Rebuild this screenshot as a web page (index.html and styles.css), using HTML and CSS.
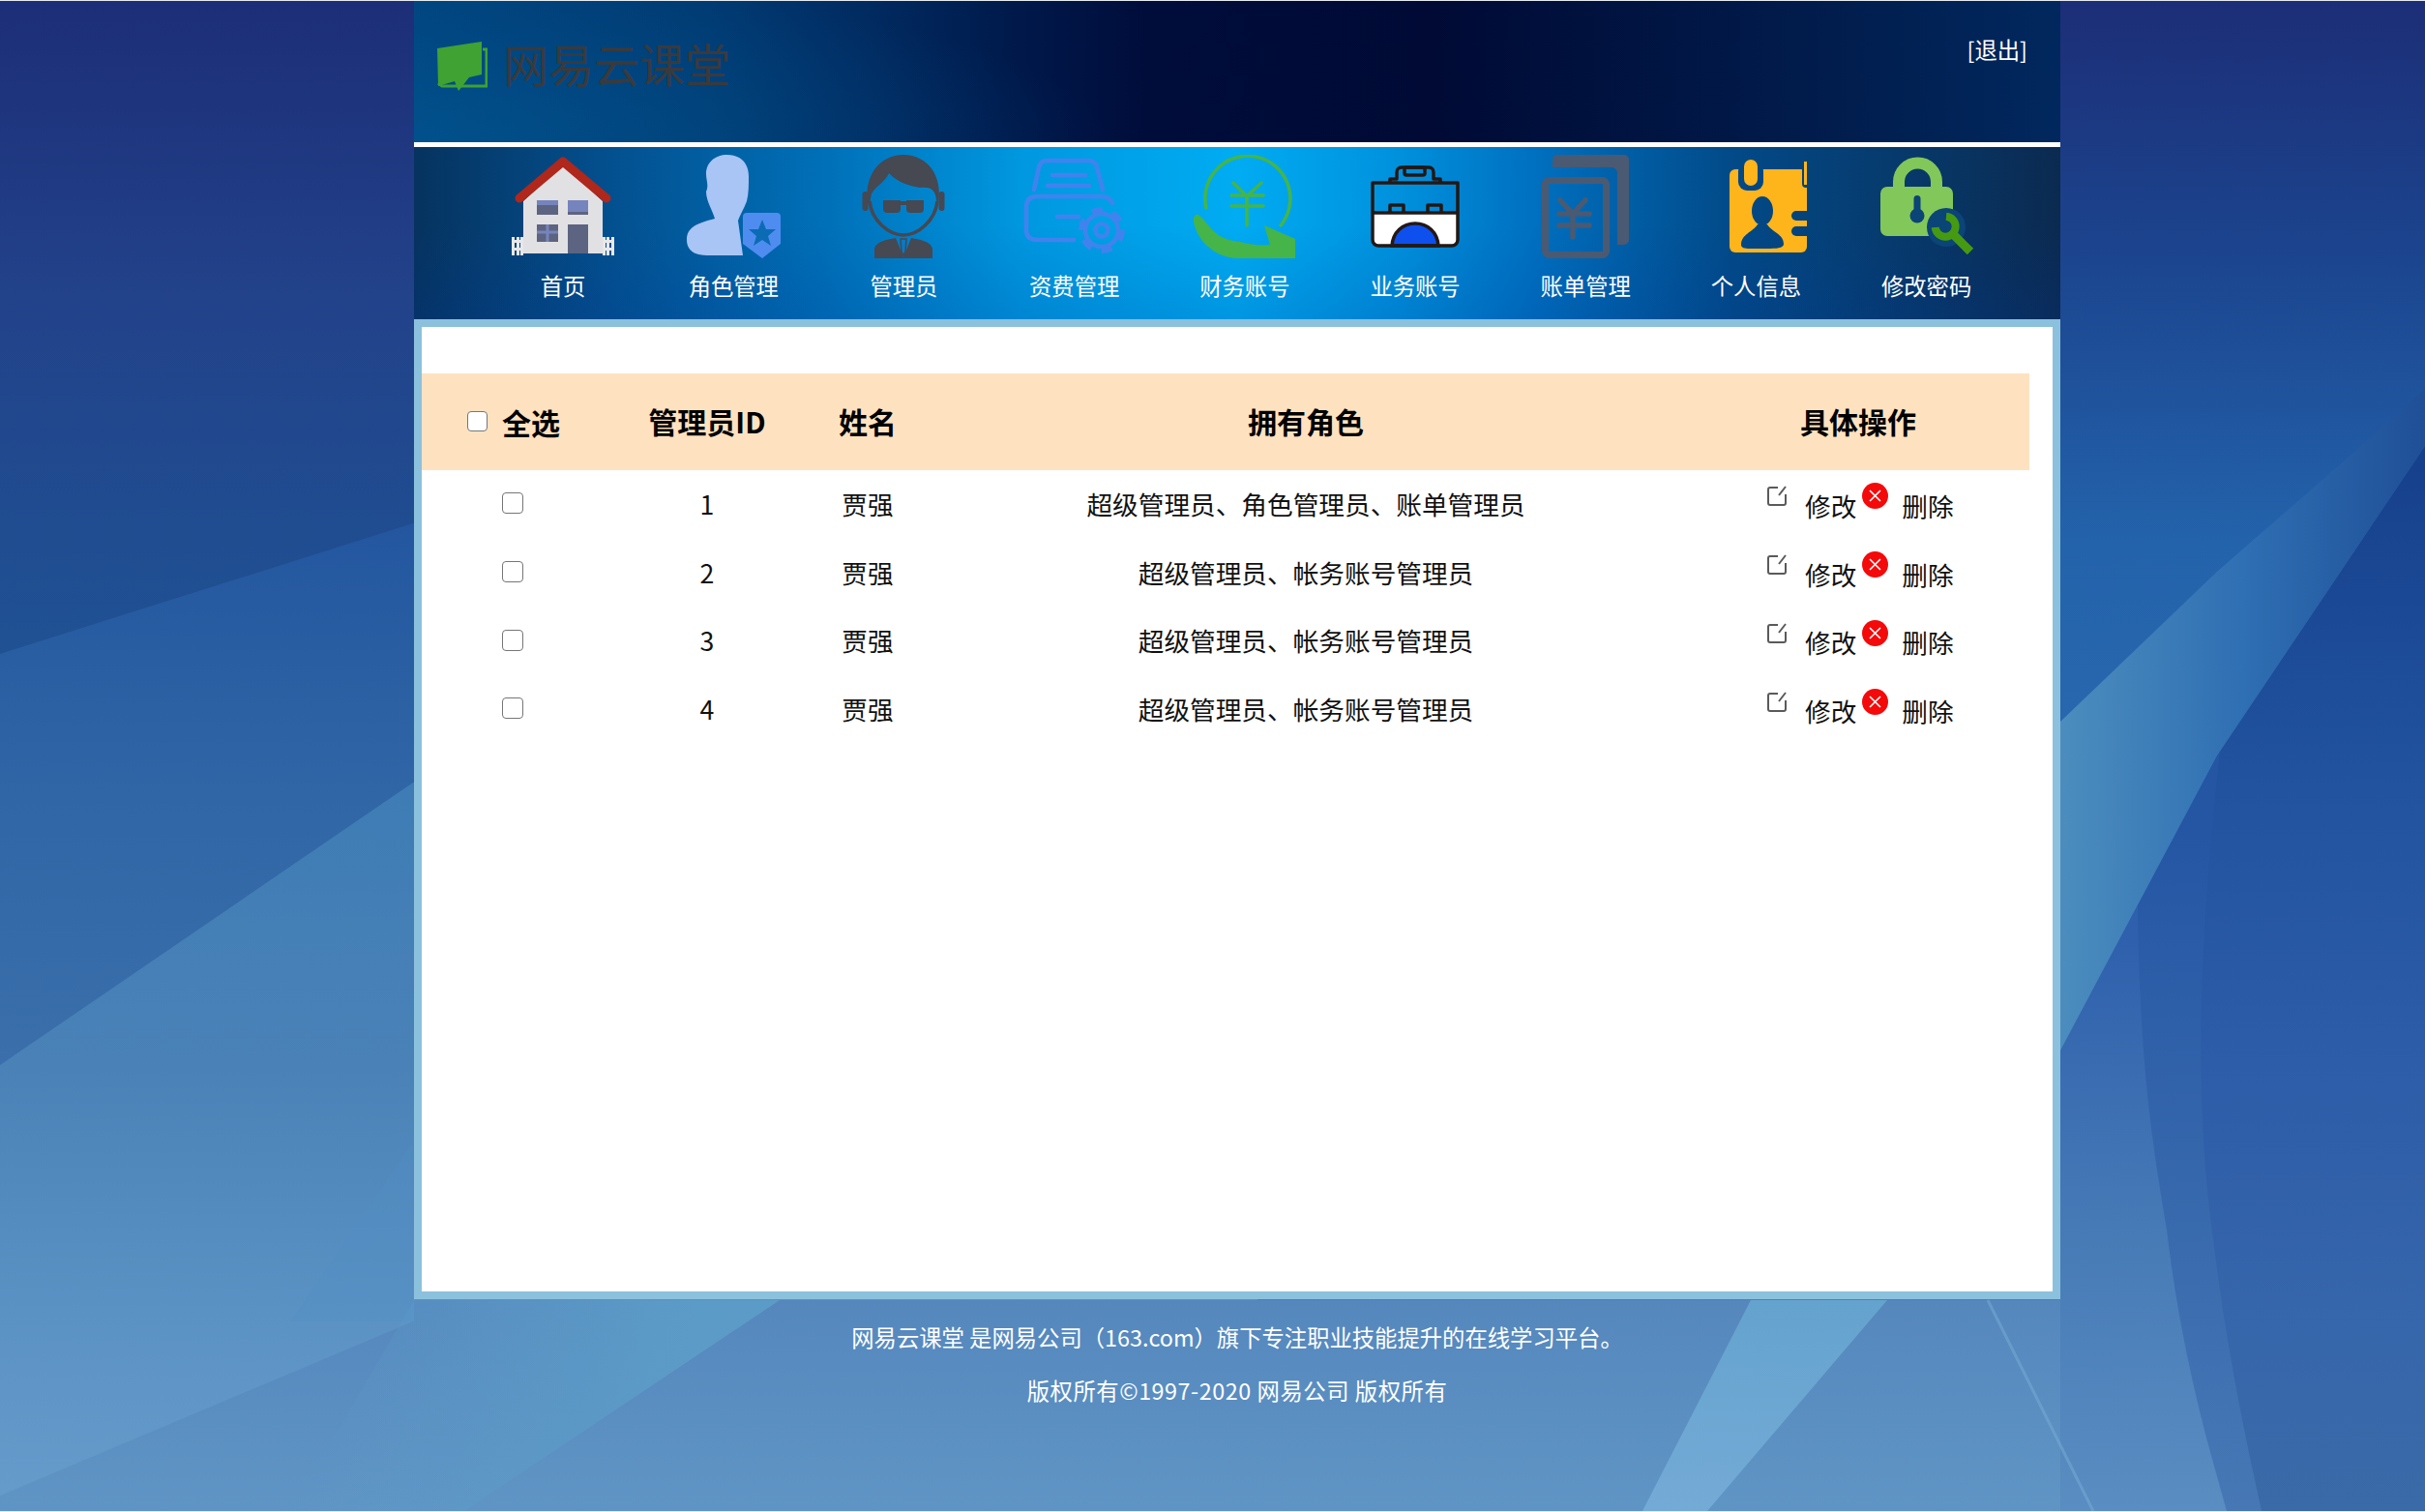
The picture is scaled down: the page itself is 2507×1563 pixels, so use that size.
FILE: index.html
```html
<!DOCTYPE html>
<html lang="zh-CN">
<head>
<meta charset="utf-8">
<title>网易云课堂</title>
<link rel="stylesheet" href="styles.css">
</head>
<body>
<svg class="wallpaper" viewBox="0 0 2507 1561" preserveAspectRatio="none" aria-hidden="true">
  <defs>
    <linearGradient id="b1" gradientUnits="userSpaceOnUse" x1="0" y1="0" x2="0" y2="680"><stop offset="0" stop-color="#1c2e77"/><stop offset=".45" stop-color="#22428a"/><stop offset="1" stop-color="#1f5294"/></linearGradient>
    <linearGradient id="b2" gradientUnits="userSpaceOnUse" x1="0" y1="540" x2="0" y2="1100"><stop offset="0" stop-color="#23569f"/><stop offset=".5" stop-color="#3066a6"/><stop offset="1" stop-color="#3a6fab"/></linearGradient>
    <linearGradient id="b3" gradientUnits="userSpaceOnUse" x1="0" y1="810" x2="0" y2="1540"><stop offset="0" stop-color="#3e7cb5"/><stop offset=".4" stop-color="#4a82b7"/><stop offset=".75" stop-color="#5b92c4"/><stop offset="1" stop-color="#659bcb"/></linearGradient>
    <linearGradient id="b4" gradientUnits="userSpaceOnUse" x1="0" y1="1340" x2="0" y2="1561"><stop offset="0" stop-color="#5587bd"/><stop offset="1" stop-color="#5f95c5"/></linearGradient>
    <linearGradient id="r1" gradientUnits="userSpaceOnUse" x1="0" y1="0" x2="0" y2="800"><stop offset="0" stop-color="#1c2e77"/><stop offset=".35" stop-color="#1c4690"/><stop offset=".7" stop-color="#2363ab"/><stop offset="1" stop-color="#2a68ae"/></linearGradient>
    <linearGradient id="r2" gradientUnits="userSpaceOnUse" x1="2130" y1="0" x2="2507" y2="0"><stop offset="0" stop-color="#4c8dbe"/><stop offset=".5" stop-color="#2f6fb3"/><stop offset="1" stop-color="#1f4f97"/></linearGradient>
    <linearGradient id="r3" gradientUnits="userSpaceOnUse" x1="0" y1="460" x2="0" y2="1561"><stop offset="0" stop-color="#163f8b"/><stop offset=".32" stop-color="#21539f"/><stop offset=".6" stop-color="#2e5da9"/><stop offset=".85" stop-color="#3767ab"/><stop offset="1" stop-color="#3b6aa8"/></linearGradient>
    <linearGradient id="r4" gradientUnits="userSpaceOnUse" x1="0" y1="860" x2="0" y2="1561"><stop offset="0" stop-color="#2456a4"/><stop offset="1" stop-color="#4778b5"/></linearGradient>
    <linearGradient id="r5" gradientUnits="userSpaceOnUse" x1="0" y1="970" x2="0" y2="1561"><stop offset="0" stop-color="#2f60ad"/><stop offset=".5" stop-color="#467ab6"/><stop offset="1" stop-color="#5a8dc1"/></linearGradient>
    <linearGradient id="m1" gradientUnits="userSpaceOnUse" x1="0" y1="1340" x2="0" y2="1561"><stop offset="0" stop-color="#64a3ce"/><stop offset="1" stop-color="#74aad6"/></linearGradient>
    <linearGradient id="m2" gradientUnits="userSpaceOnUse" x1="300" y1="0" x2="720" y2="0"><stop offset="0" stop-color="#5c9cc8" stop-opacity="0"/><stop offset="1" stop-color="#5c9cc8" stop-opacity=".95"/></linearGradient>
  </defs>
  <rect x="0" y="0" width="1300" height="1561" fill="url(#b1)"/>
  <polygon points="0,675 427,540 1300,540 1300,1561 0,1561" fill="url(#b2)"/>
  <polygon points="0,1100 427,808 1300,808 1300,1561 0,1561" fill="url(#b3)"/>
  <polygon points="427,1180 300,1365 427,1365" fill="#4f90c2" opacity=".3"/>
  <polygon points="0,1545 427,1365 1300,1365 1300,1561 0,1561" fill="url(#b4)"/>
  <rect x="1300" y="0" width="1207" height="1561" fill="url(#r1)"/>
  <path d="M1300 1085 H2130 L2292 780 L2507 460 V1561 H1300 Z" fill="url(#r3)"/>
  <path d="M2295 775 C2270 1000 2270 1150 2288 1280 C2300 1380 2320 1480 2338 1561 H1300 V1085 H2130 Z" fill="url(#r4)"/>
  <path d="M2210 935 C2212 1100 2225 1180 2240 1270 C2255 1400 2285 1500 2302 1561 H1300 V1085 H2130 Z" fill="url(#r5)"/>
  <path d="M2130 745 L2292 590 C2360 530 2420 480 2507 400 V460 L2292 780 L2130 1085 Z" fill="url(#r2)"/>
  <rect x="428" y="1343" width="1702" height="218" fill="url(#b4)"/>
  <polygon points="300,1561 428,1343 806,1343 480,1561" fill="url(#m2)"/>
  <polygon points="1810,1343 1951,1343 1765,1561 1698,1561" fill="url(#m1)"/>
  <line x1="2055" y1="1343" x2="2164" y2="1561" stroke="#77aed8" stroke-width="3" opacity=".5"/>
</svg>

<div class="page">
  <header class="topbar">
    <div class="brand">
      <svg class="brand-mark" viewBox="0 0 52 53" aria-hidden="true">
        <polygon points="0,8 46,1 46,35 33,38 22,52 18,42 1,47" fill="#3fa232"/>
        <path d="M47 9 H51 V47 H5 L1 44" fill="none" stroke="#3fa232" stroke-width="3"/>
      </svg>
      <span class="brand-name">网易云课堂</span>
    </div>
    <a class="logout">[退出]</a>
  </header>

  <nav class="menu">
    <a class="menu-item">
      <svg class="menu-icon" viewBox="0 0 110 107" aria-hidden="true">
        <polygon points="14,48 55,10 96,48 96,102 14,102" fill="#e1e1e3"/>
        <g fill="#e8e8ea"><rect x="3" y="88" width="11" height="3"/><rect x="3" y="96" width="11" height="3"/><rect x="2" y="85" width="3" height="19"/><rect x="7" y="85" width="3" height="19"/><rect x="11" y="85" width="3" height="19"/><rect x="96" y="88" width="11" height="3"/><rect x="96" y="96" width="11" height="3"/><rect x="96" y="85" width="3" height="19"/><rect x="100" y="85" width="3" height="19"/><rect x="105" y="85" width="3" height="19"/></g>
        <polyline points="10,45 55,7 100,45" fill="none" stroke="#b0271c" stroke-width="9" stroke-linecap="round" stroke-linejoin="round"/>
        <rect x="28" y="47" width="22" height="15" fill="#5d6481"/><rect x="28" y="47" width="22" height="5" fill="#7684bd"/>
        <rect x="60" y="47" width="21" height="15" fill="#7684bd"/><rect x="60" y="59" width="21" height="3" fill="#5d6481"/>
        <rect x="28" y="72" width="22" height="18" fill="#5d6481"/>
        <path d="M39 72 V90 M28 80 H50" stroke="#7684bd" stroke-width="3"/>
        <rect x="60" y="72" width="21" height="30" fill="#5d6481"/>
      </svg>
      <span class="menu-label">首页</span>
    </a>
    <a class="menu-item">
      <svg class="menu-icon" viewBox="0 0 110 107" aria-hidden="true">
        <path d="M49 0 C62 0 71 8 71 22 C71 32 71 40 69 48 C66 56 62 62 60 68 L65 104 L28 104 C14 104 7 98 7 88 C7 75 17 71 36 66 C34 58 27 48 27 38 C30 32 27 26 27 20 C27 8 36 0 49 0 Z" fill="#a9c5f5"/>
        <path d="M69 60 H100 a4 4 0 0 1 4 4 V92 L85 107 L65 92 V64 a4 4 0 0 1 4 -4 Z" fill="#4f8cf0"/>
        <polygon points="85,67 89,77 99,77 91,84 94,94 85,88 76,94 79,84 71,77 81,77" fill="#0b6cb4"/>
      </svg>
      <span class="menu-label">角色管理</span>
    </a>
    <a class="menu-item">
      <svg class="menu-icon" viewBox="0 0 110 107" aria-hidden="true">
        <path d="M18 50 C14 22 30 0 55 0 C80 0 96 22 91 50 L89 47 C88 35 82 33 72 34 C58 32 46 26 40 19 C36 28 27 32 22 40 L20 50 Z" fill="#464852"/>
        <rect x="12.5" y="38" width="6" height="20" rx="3" fill="#464852"/><rect x="91.5" y="38" width="6" height="20" rx="3" fill="#464852"/>
        <path d="M20 48 C22 68 40 83 55 83 C70 83 88 68 90 48" fill="none" stroke="#464852" stroke-width="3.5"/>
        <path d="M34 47 H52 V56 a4 4 0 0 1 -4 4 H38 a4 4 0 0 1 -4 -4 Z M58 47 H76 V56 a4 4 0 0 1 -4 4 H62 a4 4 0 0 1 -4 -4 Z M50 48 H60 V52 H50 Z" fill="#464852"/>
        <path d="M25 107 V97 C27 90 36 88 47 86 L55 106 L63 86 C74 88 83 90 85 97 V107 Z" fill="#464852"/>
        <path d="M52 87 L58 87 L57 100 L55 104 L53 100 Z" fill="#0b79c4" stroke="#464852" stroke-width="1.5"/>
      </svg>
      <span class="menu-label">管理员</span>
    </a>
    <a class="menu-item">
      <svg class="menu-icon" viewBox="0 0 110 107" aria-hidden="true">
        <g fill="none" stroke="#4183ee" stroke-width="4.5" stroke-linecap="round" stroke-linejoin="round">
          <path d="M13 36 L18 13 C19 8 22 6 27 6 H68 C74 6 77 8 78 13 L84 36"/>
          <path d="M32 21 H66 M27 32 H70 M37 64 H59"/>
          <path d="M94 50 C92 45 88 43 82 43 H17 C9 43 5 47 5 54 V78 C5 85 9 88 17 88 H54"/>
          <circle cx="83" cy="78" r="6.5"/>
          <circle cx="83" cy="78" r="17"/>
        </g>
        <circle cx="83" cy="78" r="21" fill="none" stroke="#4183ee" stroke-width="6" stroke-dasharray="11 11"/>
      </svg>
      <span class="menu-label">资费管理</span>
    </a>
    <a class="menu-item">
      <svg class="menu-icon" viewBox="0 0 110 107" aria-hidden="true">
        <path d="M15 55 A44 44 0 1 1 92 73" fill="none" stroke="#45b549" stroke-width="3.5" stroke-linecap="round"/>
        <path d="M43 29 L57 43 L72 29 M57 43 V73 M41 42 H74 M41 53 H74" fill="none" stroke="#45b549" stroke-width="3.5" stroke-linecap="round"/>
        <path d="M7 62 C18 70 22 88 50 90 C60 93 72 94 81 93 L75 73 L107 87 V107 H48 C30 107 8 95 2 70 C1 64 4 61 7 62 Z" fill="#45b549"/>
      </svg>
      <span class="menu-label">财务账号</span>
    </a>
    <a class="menu-item">
      <svg class="menu-icon" viewBox="0 0 110 107" aria-hidden="true">
        <path d="M12 60 H98 V88 a6 6 0 0 1 -6 6 H18 a6 6 0 0 1 -6 -6 Z" fill="#fff"/>
        <path d="M31 94 C32 80 42 71 55 71 C68 71 78 80 79 94 Z" fill="#0e50ee" stroke="#231815" stroke-width="3.5"/>
        <g fill="none" stroke="#231815" stroke-width="3.5" stroke-linejoin="round">
          <path d="M11 29 H99 V88 a6 6 0 0 1 -6 6 H17 a6 6 0 0 1 -6 -6 Z"/>
          <path d="M11 60 H99"/>
          <path d="M29 29 V25 H36 V18 C36 15 38 13 41 13 H69 C72 13 74 15 74 18 V25 H81 V29"/>
          <rect x="44" y="13" width="21" height="8" rx="2"/>
          <path d="M29 60 V52 H43 V60 M68 60 V52 H82 V60"/>
        </g>
      </svg>
      <span class="menu-label">业务账号</span>
    </a>
    <a class="menu-item">
      <svg class="menu-icon" viewBox="0 0 110 107" aria-hidden="true">
        <path d="M21 13 V5 a5 5 0 0 1 5 -5 H95 a5 5 0 0 1 5 5 V88 a5 5 0 0 1 -5 5 H88 V19 a6 6 0 0 0 -6 -6 Z" fill="#4a5a72"/>
        <rect x="13.5" y="26.5" width="63" height="77" rx="4" fill="none" stroke="#4a5a72" stroke-width="7"/>
        <path d="M29 47 L42 61 L55 47 M28 61 H59 M28 73 H59 M42 61 V85" fill="none" stroke="#4a5a72" stroke-width="5.5" stroke-linecap="round"/>
      </svg>
      <span class="menu-label">账单管理</span>
    </a>
    <a class="menu-item">
      <svg class="menu-icon" viewBox="0 0 110 107" aria-hidden="true">
        <defs>
          <mask id="cardcut"><rect x="0" y="0" width="110" height="107" fill="#fff"/>
            <rect x="37" y="8" width="26" height="29" rx="9" fill="#000"/>
            <ellipse cx="62" cy="58" rx="11" ry="15" fill="#000"/>
            <path d="M40 93 C40 82 52 80 57 72 H67 C72 80 84 82 84 92 C84 97 76 97 62 97 C48 97 40 98 40 93 Z" fill="#000"/>
            <rect x="92" y="58" width="24" height="10" rx="5" fill="#000"/>
            <rect x="92" y="74" width="24" height="10" rx="5" fill="#000"/>
            <rect x="103" y="8" width="8" height="26" rx="4" fill="#000"/>
          </mask>
        </defs>
        <rect x="28" y="15" width="80" height="86" rx="6" fill="#fdb51b" mask="url(#cardcut)"/>
        <rect x="43" y="5" width="14" height="27" rx="7" fill="#fdb51b"/>
        <rect x="105" y="7" width="3" height="24" fill="#fdb51b"/>
      </svg>
      <span class="menu-label">个人信息</span>
    </a>
    <a class="menu-item">
      <svg class="menu-icon" viewBox="0 0 110 107" aria-hidden="true">
        <path d="M26 36 V28 A19.5 19.5 0 0 1 65 28 V36" fill="none" stroke="#82c759" stroke-width="12"/>
        <rect x="7" y="33" width="75" height="51" rx="7" fill="#82c759"/>
        <circle cx="45" cy="63" r="7.5" fill="#0b4477"/><rect x="41.5" y="42" width="7" height="20" rx="3.5" fill="#0b4477"/>
        <circle cx="75" cy="75" r="20" fill="#0b4477"/>
        <path d="M67 67 A10.5 10.5 0 1 0 83 67" fill="none" stroke="#469a12" stroke-width="8" transform="rotate(-45 75 75)"/>
        <path d="M80 80 L100 100" stroke="#469a12" stroke-width="9"/>
      </svg>
      <span class="menu-label">修改密码</span>
    </a>
  </nav>

  <main class="panel">
    <table class="grid">
      <colgroup><col class="c1"><col class="c2"><col class="c3"><col class="c4"><col class="c5"></colgroup>
      <thead>
        <tr>
          <th><label class="all"><input class="tick tick-head" type="checkbox"><span>全选</span></label></th>
          <th>管理员ID</th>
          <th>姓名</th>
          <th>拥有角色</th>
          <th>具体操作</th>
        </tr>
      </thead>
      <tbody>
        <tr>
          <td><input class="tick" type="checkbox"></td><td>1</td><td>贾强</td><td>超级管理员、角色管理员、账单管理员</td>
          <td><div class="ops"><svg class="edit" viewBox="0 0 20 21" aria-hidden="true"><path d="M11 2 H3 a2 2 0 0 0 -2 2 V18 a2 2 0 0 0 2 2 H17 a2 2 0 0 0 2 -2 V9 M12 10 L19 1"/></svg><span class="op-edit">修改</span><svg class="del" viewBox="0 0 27 27" aria-hidden="true"><circle cx="13.5" cy="13.5" r="13.5"/><path d="M8 8 L19 19 M19 8 L8 19"/></svg><span class="op-del">删除</span></div></td>
        </tr>
        <tr>
          <td><input class="tick" type="checkbox"></td><td>2</td><td>贾强</td><td>超级管理员、帐务账号管理员</td>
          <td><div class="ops"><svg class="edit" viewBox="0 0 20 21" aria-hidden="true"><path d="M11 2 H3 a2 2 0 0 0 -2 2 V18 a2 2 0 0 0 2 2 H17 a2 2 0 0 0 2 -2 V9 M12 10 L19 1"/></svg><span class="op-edit">修改</span><svg class="del" viewBox="0 0 27 27" aria-hidden="true"><circle cx="13.5" cy="13.5" r="13.5"/><path d="M8 8 L19 19 M19 8 L8 19"/></svg><span class="op-del">删除</span></div></td>
        </tr>
        <tr>
          <td><input class="tick" type="checkbox"></td><td>3</td><td>贾强</td><td>超级管理员、帐务账号管理员</td>
          <td><div class="ops"><svg class="edit" viewBox="0 0 20 21" aria-hidden="true"><path d="M11 2 H3 a2 2 0 0 0 -2 2 V18 a2 2 0 0 0 2 2 H17 a2 2 0 0 0 2 -2 V9 M12 10 L19 1"/></svg><span class="op-edit">修改</span><svg class="del" viewBox="0 0 27 27" aria-hidden="true"><circle cx="13.5" cy="13.5" r="13.5"/><path d="M8 8 L19 19 M19 8 L8 19"/></svg><span class="op-del">删除</span></div></td>
        </tr>
        <tr>
          <td><input class="tick" type="checkbox"></td><td>4</td><td>贾强</td><td>超级管理员、帐务账号管理员</td>
          <td><div class="ops"><svg class="edit" viewBox="0 0 20 21" aria-hidden="true"><path d="M11 2 H3 a2 2 0 0 0 -2 2 V18 a2 2 0 0 0 2 2 H17 a2 2 0 0 0 2 -2 V9 M12 10 L19 1"/></svg><span class="op-edit">修改</span><svg class="del" viewBox="0 0 27 27" aria-hidden="true"><circle cx="13.5" cy="13.5" r="13.5"/><path d="M8 8 L19 19 M19 8 L8 19"/></svg><span class="op-del">删除</span></div></td>
        </tr>
      </tbody>
    </table>
  </main>

  <footer class="foot">
    <p>网易云课堂 是网易公司（163.com）旗下专注职业技能提升的在线学习平台。</p>
    <p class="foot-copy">版权所有©1997-2020 网易公司 版权所有</p>
  </footer>
</div>
</body>
</html>
```

FILE: styles.css
```css
* { box-sizing: border-box; }

html, body {
  margin: 0;
  height: 1563px;
  overflow: hidden;
}

body {
  position: relative;
  background: #e6ebf0;
  font-family: "Noto Sans CJK SC", "Noto Sans", sans-serif;
  color: #111;
}

.wallpaper {
  position: absolute;
  left: 0;
  top: 1px;
  width: 2507px;
  height: 1561px;
}

.page {
  position: relative;
  width: 1702px;
  margin-left: 428px;
  padding-top: 1px;
}

.topbar {
  height: 146px;
  display: flex;
  justify-content: space-between;
  align-items: flex-start;
  padding: 28px 34px 0 24px;
  background:
    radial-gradient(ellipse 720px 170px at 0 100%, rgba(0, 100, 160, .4), rgba(0, 100, 160, 0)),
    linear-gradient(90deg, #01447f 0%, #013a72 18%, #012a60 28%, #001a4c 36%, #000c3a 45%, #000a35 62%, #011c4c 85%, #01285e 100%);
}

.brand {
  display: flex;
  align-items: flex-start;
  gap: 16px;
  margin-top: 13px;
}

.brand-mark {
  width: 52px;
  height: 53px;
  flex: none;
}

.brand-name {
  font-size: 47px;
  font-weight: 400;
  line-height: 46px;
  color: #3a3a3c;
  white-space: nowrap;
}

.logout {
  font-size: 23.33px;
  line-height: 44px;
  color: #fff;
}

.menu {
  height: 183px;
  display: flex;
  padding: 8px 0 0 66px;
  border-top: 5px solid #fff;
  background:
    linear-gradient(180deg, rgba(0, 50, 150, 0) 45%, rgba(0, 50, 150, .18) 100%),
    linear-gradient(90deg, #06335f 0%, #03508f 12%, #0070b8 25%, #0098e0 37%, #00acf2 50%, #0090dc 60%, #0070c0 68%, #024a88 80%, #0b2a50 100%);
}

.menu-item {
  width: 176.2px;
  flex: none;
  display: flex;
  flex-direction: column;
  align-items: center;
}

.menu-icon {
  width: 110px;
  height: 107px;
  flex: none;
}

.menu-label {
  margin-top: 12px;
  font-size: 23.33px;
  line-height: 32px;
  color: #fff;
  white-space: nowrap;
}

.panel {
  height: 1013px;
  border: 8px solid #8bc1dc;
  background: #fff;
  padding-top: 48px;
}

.grid {
  width: 1662px;
  table-layout: fixed;
  border-collapse: collapse;
  font-size: 26.67px;
}

.c1 { width: 188px; }
.c2 { width: 214px; }
.c3 { width: 118px; }
.c4 { width: 788px; }
.c5 { width: 354px; }

.grid th {
  height: 100px;
  padding: 0 0 3px;
  background: #fee2c0;
  font-size: 30px;
  font-weight: 700;
  color: #000;
}

.grid td {
  height: 70.8px;
  padding: 0 0 2px;
  text-align: center;
  vertical-align: middle;
}

.all {
  display: inline-flex;
  align-items: center;
  gap: 15px;
  padding-left: 2px;
}

.tick {
  appearance: none;
  width: 22px;
  height: 22px;
  margin: 0 0 9px;
  vertical-align: middle;
  background: #fff;
  border: 1.7px solid #767676;
  border-radius: 4px;
}

.tick-head {
  margin: 0;
  width: 21px;
  height: 21px;
}

.ops {
  display: flex;
  align-items: center;
  padding: 5px 0 0 83px;
  line-height: 36px;
}

.edit {
  width: 20px;
  height: 21px;
  margin: 0 19px 20px 0;
  flex: none;
}

.edit path {
  fill: none;
  stroke: #5a5a5a;
  stroke-width: 2;
}

.del {
  width: 27px;
  height: 27px;
  margin: 0 14px 20px 6px;
  flex: none;
}

.del circle { fill: #f40a0a; }

.del path {
  fill: none;
  stroke: #fff;
  stroke-width: 1.6;
}

.foot {
  padding-top: 22px;
  text-align: center;
  color: #fff;
  font-size: 23.33px;
  line-height: 34px;
}

.foot p {
  margin: 0 0 21px;
}

.foot .foot-copy {
  letter-spacing: .55px;
}
```
